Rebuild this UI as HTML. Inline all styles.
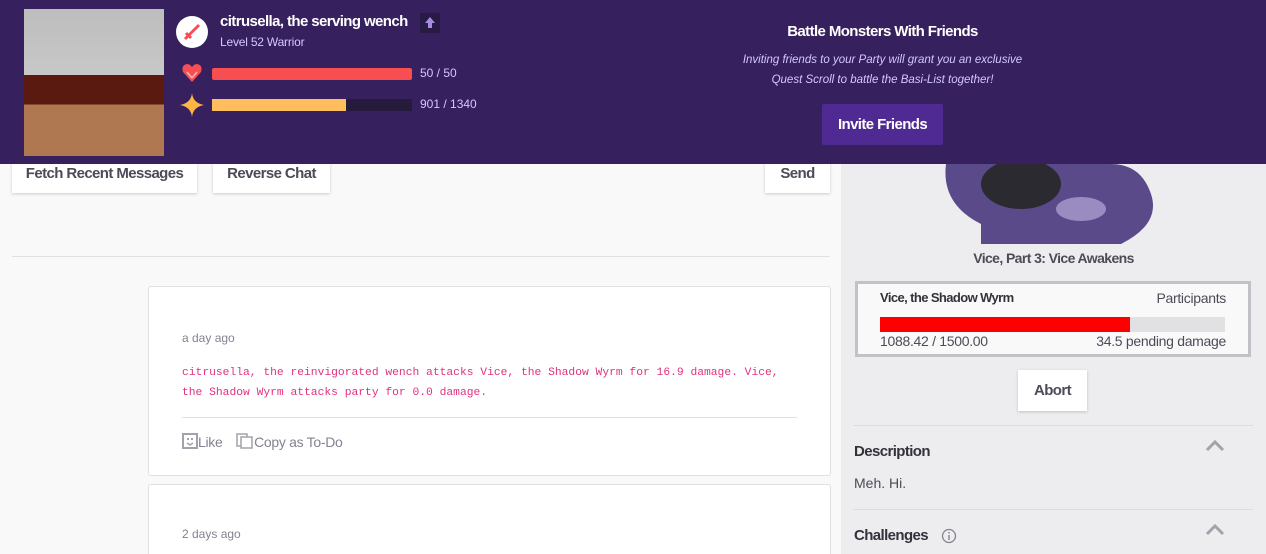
<!DOCTYPE html>
<html style="overflow:hidden;height:554px"><head><style>
body{margin:0;width:1266px;height:554px;overflow:hidden;background:#f9f9f9;font-family:"Liberation Sans",sans-serif;position:relative}
.hdr{position:absolute;left:0;top:0;width:1266px;height:164px;background:#36205d}
.b{font-weight:bold;letter-spacing:-0.6px}
.btn{position:absolute;background:#fff;box-shadow:0 1px 3px rgba(26,24,29,.2);font-weight:bold;letter-spacing:-0.6px;color:#4e4a57;font-size:15px;text-align:center}
.side{position:absolute;left:841px;top:164px;width:425px;height:390px;background:#ededf0}
.card{position:absolute;left:148px;width:681px;background:#fff;border:1px solid #e1e0e3;border-radius:3px}
</style></head><body>
<div class="btn" style="left:12px;top:156px;width:185px;height:37px;line-height:36px">Fetch Recent Messages</div>
<div class="btn" style="left:213px;top:156px;width:117px;height:37px;line-height:36px">Reverse Chat</div>
<div class="btn" style="left:765px;top:156px;width:65px;height:37px;line-height:36px">Send</div>
<div style="position:absolute;left:12px;top:256px;width:818px;height:1px;background:#e1e0e3"></div>
<div class="card" style="top:286px;height:188px">
<div style="position:absolute;left:33px;top:44px;font-size:12px;color:#878190">a day ago</div>
<div style="position:absolute;left:33px;top:76px;width:612px;font-family:'Liberation Mono',monospace;font-size:11.3px;line-height:20px;color:#e2317f">citrusella, the reinvigorated wench attacks Vice, the Shadow Wyrm for 16.9 damage. Vice, the Shadow Wyrm attacks party for 0.0 damage.</div>
<div style="position:absolute;left:33px;top:130px;width:615px;height:1px;background:#e1e0e3"></div>
<div style="position:absolute;left:33px;top:146px;font-size:14px;color:#878190;letter-spacing:-0.3px;white-space:nowrap">
<svg width="16" height="16" style="vertical-align:-2px"><rect x="1" y="1" width="14" height="14" fill="none" stroke="#a5a1ac" stroke-width="2"/><rect x="5" y="5" width="2" height="2" fill="#a5a1ac"/><rect x="9" y="5" width="2" height="2" fill="#a5a1ac"/><path d="M5 10 L8 12 L11 10" fill="none" stroke="#a5a1ac" stroke-width="1.5"/></svg>Like
<svg width="18" height="16" style="vertical-align:-2px;margin-left:10px"><rect x="1" y="1" width="10" height="12" fill="none" stroke="#a5a1ac" stroke-width="1.5"/><rect x="5" y="4" width="11" height="11" fill="#fff" stroke="#a5a1ac" stroke-width="1.5"/></svg>Copy as To-Do</div>
</div>
<div class="card" style="top:484px;height:80px">
<div style="position:absolute;left:33px;top:42px;font-size:12px;color:#878190">2 days ago</div>
</div>
<div class="side">
<svg style="position:absolute;left:100px;top:0" width="220" height="80"><path d="M5 0 Q0 40 40 60 L40 80 L180 80 Q220 60 210 30 Q200 0 170 0 Z" fill="#5a4a8a"/><ellipse cx="80" cy="20" rx="40" ry="25" fill="#2a2a30"/><ellipse cx="140" cy="45" rx="25" ry="12" fill="#9a8cc0"/></svg>
<div class="b" style="position:absolute;left:0;width:425px;top:86px;text-align:center;font-size:14px;color:#4e4a57">Vice, Part 3: Vice Awakens</div>
<div style="position:absolute;left:14px;top:117px;width:390px;height:70px;border:3px solid #c3c0c7;background:#f9f9f9">
<div class="b" style="position:absolute;left:22px;top:6px;font-size:13px;color:#34313a">Vice, the Shadow Wyrm</div>
<div style="position:absolute;right:22px;top:6px;font-size:14px;color:#4e4a57;letter-spacing:-0.3px">Participants</div>
<div style="position:absolute;left:22px;top:33px;width:345px;height:15px;background:#e1e0e3"><div style="width:250px;height:15px;background:#f00"></div></div>
<div style="position:absolute;left:22px;top:49px;font-size:14px;color:#4e4a57;letter-spacing:-0.3px">1088.42 / 1500.00</div>
<div style="position:absolute;right:22px;top:49px;font-size:14px;color:#4e4a57;letter-spacing:-0.3px">34.5 pending damage</div>
</div>
<div class="btn" style="left:177px;top:206px;width:69px;height:41px;line-height:41px">Abort</div>
<div style="position:absolute;left:12px;top:261px;width:400px;height:1px;background:#dcdbe0"></div>
<div class="b" style="position:absolute;left:13px;top:279px;font-size:15px;color:#34313a">Description</div>
<svg style="position:absolute;left:364px;top:276px" width="20" height="12"><path d="M2 10 L10 2 L18 10" fill="none" stroke="#a5a1ac" stroke-width="3"/></svg>
<div style="position:absolute;left:13px;top:311px;font-size:14px;color:#4e4a57">Meh. Hi.</div>
<div style="position:absolute;left:12px;top:345px;width:400px;height:1px;background:#dcdbe0"></div>
<div class="b" style="position:absolute;left:13px;top:363px;font-size:15px;color:#34313a">Challenges</div>
<svg style="position:absolute;left:100px;top:364px" width="16" height="16"><circle cx="8" cy="8" r="6.5" fill="none" stroke="#878190" stroke-width="1.3"/><rect x="7.3" y="7" width="1.4" height="5" fill="#878190"/><rect x="7.3" y="4" width="1.4" height="1.5" fill="#878190"/></svg>
<svg style="position:absolute;left:364px;top:360px" width="20" height="12"><path d="M2 10 L10 2 L18 10" fill="none" stroke="#a5a1ac" stroke-width="3"/></svg>
</div>
<div class="hdr">
<div style="position:absolute;left:24px;top:9px;width:140px;height:147px;background:linear-gradient(#bdbdbd 0,#c8c8c8 45%,#5a1a10 45%,#5a1a10 65%,#b07850 65%)"></div>
<div style="position:absolute;left:176px;top:16px;width:32px;height:32px;border-radius:50%;background:#fff"><svg width="32" height="32"><path d="M22 8 L24 10 L14 20 L12 18 Z" fill="#f74e52"/><path d="M10 17 L15 22 M9 23 L12 20" stroke="#f74e52" stroke-width="3"/></svg></div>
<div class="b" style="position:absolute;left:220px;top:13px;font-size:15px;color:#fff;white-space:nowrap">citrusella, the serving wench</div>
<div style="position:absolute;left:420px;top:13px;width:20px;height:20px;background:#271a45"><svg width="20" height="20"><path d="M10 4 L15 10 L12 10 L12 15 L8 15 L8 10 L5 10 Z" fill="#a58ce0"/></svg></div>
<div style="position:absolute;left:220px;top:35px;font-size:12px;color:#d5c8ff;letter-spacing:-0.2px">Level 52 Warrior</div>
<svg style="position:absolute;left:181px;top:63px" width="22" height="20"><path d="M11 19 L2 9 Q0 2 6 1 Q9 1 11 4 Q13 1 16 1 Q22 2 20 9 Z" fill="#f74e52"/><path d="M11 15 L6 9 M11 15 L16 9" stroke="#ffb0b5" stroke-width="1.5"/></svg>
<div style="position:absolute;left:212px;top:68px;width:200px;height:12px;background:#271b3d"><div style="width:200px;height:12px;background:#f74e52;border-radius:2px"></div></div>
<div style="position:absolute;left:420px;top:66px;font-size:12px;color:#d5c8ff">50 / 50</div>
<svg style="position:absolute;left:180px;top:93px" width="24" height="24"><path d="M12 0 Q13 10 24 12 Q13 14 12 24 Q11 14 0 12 Q11 10 12 0 Z" fill="#ffb445"/></svg>
<div style="position:absolute;left:212px;top:99px;width:200px;height:12px;background:#271b3d"><div style="width:134px;height:12px;background:#ffbe5d"></div></div>
<div style="position:absolute;left:420px;top:97px;font-size:12px;color:#d5c8ff">901 / 1340</div>
<div class="b" style="position:absolute;left:680px;width:405px;top:23px;text-align:center;font-size:15px;color:#fff">Battle Monsters With Friends</div>
<div style="position:absolute;left:680px;width:405px;top:50px;text-align:center;font-style:italic;font-size:11.5px;line-height:20px;color:#d5c8ff">Inviting friends to your Party will grant you an exclusive<br>Quest Scroll to battle the Basi-List together!</div>
<div class="b" style="position:absolute;left:822px;top:104px;width:121px;height:41px;background:#4f2a93;color:#fff;font-size:15px;text-align:center;line-height:42px;border-radius:2px">Invite Friends</div>
</div>
</body></html>
